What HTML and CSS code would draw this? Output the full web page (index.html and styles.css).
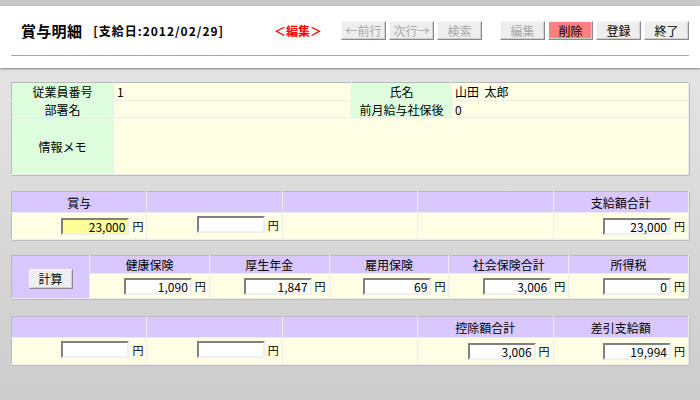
FILE: index.html
```html
<!DOCTYPE html>
<html lang="ja">
<head>
<meta charset="utf-8">
<link rel="stylesheet" href="styles.css">
</head>
<body>
<div class="topband"></div>
<header class="header">
  <div class="header-inner">
    <h1 class="title">賞与明細</h1>
    <span class="subtitle">[支給日:2012/02/29]</span>
    <span class="mode">＜編集＞</span>
    <div class="btns">
      <button class="btn" disabled>←前行</button>
      <button class="btn" disabled>次行→</button>
      <button class="btn" disabled>検索</button>
      <button class="btn btn-gap" disabled>編集</button>
      <button class="btn btn-del">削除</button>
      <button class="btn">登録</button>
      <button class="btn">終了</button>
    </div>
  </div>
</header>

<main class="main">
  <table class="grid info">
    <colgroup><col class="c1"><col class="c2"><col class="c3"><col></colgroup>
    <tr class="r18">
      <td class="lbl">従業員番号</td><td class="val">1</td>
      <td class="lbl">氏名</td><td class="val">山田&nbsp;&nbsp;太郎</td>
    </tr>
    <tr class="r17">
      <td class="lbl">部署名</td><td class="val"></td>
      <td class="lbl">前月給与社保後</td><td class="val">0</td>
    </tr>
    <tr class="r56">
      <td class="lbl">情報メモ</td><td class="val" colspan="3"></td>
    </tr>
  </table>

  <table class="grid five t2">
    <tr class="hrow">
      <th>賞与</th><th></th><th></th><th></th><th>支給額合計</th>
    </tr>
    <tr class="drow">
      <td><span class="fld"><span class="inp inp-active">23,000</span><span class="yen">円</span></span></td>
      <td><span class="fld"><span class="inp"></span><span class="yen">円</span></span></td>
      <td></td>
      <td></td>
      <td><span class="fld"><span class="inp">23,000</span><span class="yen">円</span></span></td>
    </tr>
  </table>

  <table class="grid six t3">
    <tr class="hrow3">
      <th rowspan="2" class="calc-cell"><button class="btn calc">計算</button></th>
      <th class="n">健康保険</th><th class="n">厚生年金</th><th class="n">雇用保険</th><th class="n">社会保険合計</th><th class="n">所得税</th>
    </tr>
    <tr class="drow3">
      <td><span class="fld"><span class="inp">1,090</span><span class="yen">円</span></span></td>
      <td><span class="fld"><span class="inp">1,847</span><span class="yen">円</span></span></td>
      <td><span class="fld"><span class="inp">69</span><span class="yen">円</span></span></td>
      <td><span class="fld"><span class="inp">3,006</span><span class="yen">円</span></span></td>
      <td><span class="fld"><span class="inp">0</span><span class="yen">円</span></span></td>
    </tr>
  </table>

  <table class="grid five t4">
    <tr class="hrow">
      <th></th><th></th><th></th><th>控除額合計</th><th>差引支給額</th>
    </tr>
    <tr class="drow">
      <td><span class="fld"><span class="inp"></span><span class="yen">円</span></span></td>
      <td><span class="fld"><span class="inp"></span><span class="yen">円</span></span></td>
      <td></td>
      <td><span class="fld"><span class="inp">3,006</span><span class="yen">円</span></span></td>
      <td><span class="fld"><span class="inp">19,994</span><span class="yen">円</span></span></td>
    </tr>
  </table>
</main>
</body>
</html>
```

FILE: styles.css
```css
* { box-sizing: border-box; }
html, body { margin: 0; padding: 0; }
body {
  width: 700px;
  height: 400px;
  overflow: hidden;
  font-family: "Noto Sans CJK JP", "Noto Sans", sans-serif;
  font-size: 12px;
  color: #000;
  background: linear-gradient(#e9e9e9 0px, #dcdcdc 180px, #cccccc 400px);
}
.topband { height: 6px; background: #c8c8c8; }
.header {
  background: #fff;
  height: 62px;
  box-shadow: 0 1px 2px rgba(0,0,0,0.45);
  position: relative;
}
.header-inner {
  margin: 0 11px;
  height: 50px;
  border-bottom: 1px solid #a8a8a8;
  display: flex;
  align-items: center;
  padding-left: 10px;
}
.title {
  margin: 0;
  font-size: 15px;
  font-weight: bold;
  letter-spacing: 0.3px;
}
.subtitle {
  margin-left: 11px;
  font-weight: bold;
  font-size: 12px;
  letter-spacing: 1px;
}
.mode {
  margin-left: 50px;
  color: #ff0000;
  font-weight: bold;
  font-size: 12px;
}
.btns {
  margin-left: auto;
  display: flex;
  gap: 3px;
}
.btn {
  width: 45px;
  height: 19px;
  padding: 0;
  font-family: inherit;
  font-size: 12px;
  line-height: 15px;
  color: #000;
  background: #eeeeee;
  border: 1px solid;
  border-color: #f8f8f8 #8a8a8a #8a8a8a #f8f8f8;
  box-shadow: inset -1px -1px 0 #cfcfcf;
}
.btn[disabled] { color: #a8a8a8; }
.btn-gap { margin-left: 15px; }
.btn-del { background: #ff8080; }

.main { padding: 14px 11px 0; }
.grid {
  width: 678px;
  border-collapse: collapse;
  table-layout: fixed;
  border: 1px solid #c4c4c4;
  box-shadow: 1px 1px 0 #bdbdbd;
}
.grid td, .grid th {
  border: 1px solid #b9b9b9;
  border-right-color: #ececec;
  border-bottom-color: #ececec;
  padding: 0;
  font-weight: normal;
}
.info .c1 { width: 102px; }
.info .c2 { width: 238px; }
.info .c3 { width: 100px; }
.info .lbl { background: #ddffdd; text-align: center; line-height: 15px; }
.info .val { background: #ffffe6; padding-left: 3px; vertical-align: middle; line-height: 15px; }
.r18 { height: 18px; }
.r17 { height: 17px; }
.r56 { height: 57px; }

.t2 { margin-top: 16px; }
.t3 { margin-top: 15px; }
.t4 { margin-top: 17px; }

.hrow { height: 21px; }
.hrow th { background: #d8c8ff; text-align: center; }
.five th, .five td { width: 20%; }
.drow { height: 27px; }
.drow td, .drow3 td {
  background: #ffffe6;
  text-align: right;
  padding-right: 4px;
  vertical-align: middle;
}
.hrow3 { height: 18px; }
.hrow3 th.n { background: #d8c8ff; text-align: center; line-height: 15px; }
.drow3 { height: 25px; }
.calc-cell { width: 78px; background: #d8c8ff; text-align: center; vertical-align: middle; padding-top: 3px !important; }
.calc { width: 44px; height: 20px; background: #efefef; }

.fld { display: inline-flex; align-items: center; gap: 3px; }
.inp {
  display: inline-block;
  width: 68px;
  height: 17px;
  line-height: 13px;
  background: #fff;
  border: 2px solid;
  border-color: #808080 #f0f0f0 #f0f0f0 #808080;
  text-align: right;
  padding-right: 2px;
  font-size: 12px;
  color: #000;
}
.inp-active { background: #ffff99; }
.yen { font-size: 11px; width: 10px; }
```
